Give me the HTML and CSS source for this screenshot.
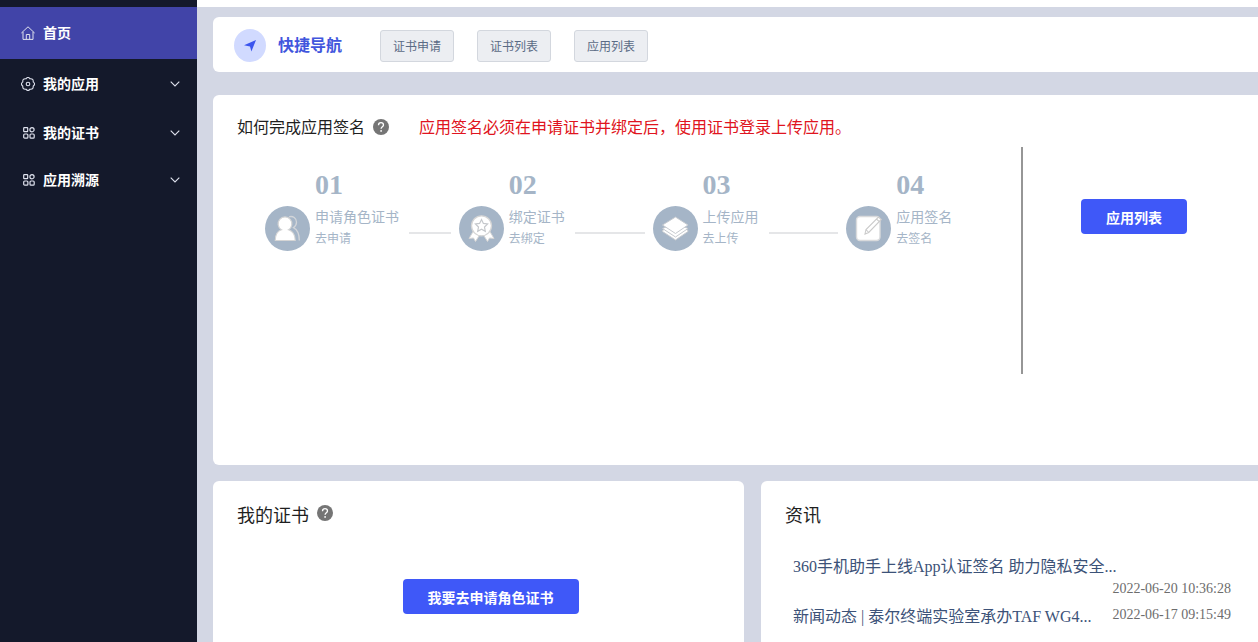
FILE: index.html
```html
<!DOCTYPE html>
<html lang="zh-CN">
<head>
<meta charset="utf-8">
<title>首页</title>
<link rel="stylesheet" href="styles.css">
</head>
<body>
<svg class="defs" aria-hidden="true">
  <symbol id="chevron" viewBox="0 0 10 6"><path d="M.7.7 5 5 9.300.7" fill="none" stroke="currentColor" stroke-width="1.100"/></symbol>
  <symbol id="blocks" viewBox="0 0 12 12"><g fill="none" stroke="currentColor" stroke-width="1.200"><rect x=".7" y=".7" width="4" height="4" rx=".6"/><circle cx="9" cy="2.700" r="2.100"/><rect x=".7" y="7" width="4.200" height="4.200" rx="1"/><rect x="7" y="7" width="4.200" height="4.200" rx="1"/></g></symbol>
  <symbol id="help" viewBox="0 0 16 16"><circle cx="8" cy="8" r="8" fill="#757575"/><path d="M5.500 6.200C5.500 4.600 6.600 3.700 8 3.700s2.500.9 2.500 2.300c0 1.700-2.400 1.900-2.400 3.800" fill="none" stroke="#fff" stroke-width="1.300"/><circle cx="8.100" cy="11.900" r=".9" fill="#fff"/></symbol>
</svg>
<div class="layout">
  <nav class="sidebar">
    <a class="item active" href="#">
      <svg class="icon" viewBox="0 0 14 14"><g fill="none" stroke="currentColor"><path d="M.4 7 7 .8 13.600 7M2 6v7.400h10V6"/><path d="M5.300 13.400V8.500h3.400v4.900"/></g></svg>
      <span class="label">首页</span>
    </a>
    <a class="item" href="#">
      <svg class="icon" viewBox="0 0 14 14"><g fill="none" stroke="currentColor" stroke-width="1.100"><path d="M4.900 1.800Q7-.9 9.100 1.800 12.600 1.400 12.200 4.900 14.900 7 12.200 9.100 12.600 12.600 9.100 12.200 7 14.900 4.900 12.200 1.400 12.600 1.800 9.100-.9 7 1.800 4.900 1.400 1.400 4.900 1.800Z"/><circle cx="7" cy="7" r="1.800"/></g></svg>
      <span class="label">我的应用</span>
      <svg class="chevron"><use href="#chevron"/></svg>
    </a>
    <a class="item small" href="#">
      <svg class="icon blocks"><use href="#blocks"/></svg>
      <span class="label">我的证书</span>
      <svg class="chevron"><use href="#chevron"/></svg>
    </a>
    <a class="item small" href="#">
      <svg class="icon blocks"><use href="#blocks"/></svg>
      <span class="label">应用溯源</span>
      <svg class="chevron"><use href="#chevron"/></svg>
    </a>
  </nav>
  <main class="main">
    <section class="card quick">
      <span class="badge"><svg class="plane" viewBox="0 0 12 12"><path d="M12 0 7.400 11.500 6 6.600 0 5.200Z" fill="#3b55ee"/></svg></span>
      <h2 class="quick-title">快捷导航</h2>
      <div class="quick-links">
        <button class="btn-plain">证书申请</button>
        <button class="btn-plain">证书列表</button>
        <button class="btn-plain">应用列表</button>
      </div>
    </section>

    <section class="card guide">
      <header class="card-head">
        <h2 class="guide-title">如何完成应用签名</h2>
        <svg class="help"><use href="#help"/></svg>
        <p class="warning">应用签名必须在申请证书并绑定后，使用证书登录上传应用。</p>
      </header>
      <div class="guide-body">
        <ol class="steps">
          <li class="step">
            <svg class="step-icon" viewBox="0 0 45 45"><circle cx="22.500" cy="22.500" r="22.500" fill="#a5b5c7"/><path d="M24 10.800c4-1.200 7.500 1.500 7.500 5.500 0 2.400-1.300 4.200-3 5.300 4 2 5.800 5.800 5.800 12.900" fill="none" stroke="#d2d5d9" stroke-width="1.300"/><path d="M10.300 34.500c0-5.800 2-9.300 6.200-10.700a6.900 6.900 0 1 1 7 0c4.200 1.400 6.700 4.900 6.700 10.700Z" fill="#fff" stroke="#d5d5d5" stroke-width="1.200"/></svg>
            <div class="step-text"><strong class="num">01</strong><span class="name">申请角色证书</span><a class="go" href="#">去申请</a></div>
            <i class="line"></i>
          </li>
          <li class="step">
            <svg class="step-icon" viewBox="0 0 45 45"><circle cx="22.500" cy="22.500" r="22.500" fill="#a5b5c7"/><path d="m15 24-5 8.500 4.500-.5 2 3.500 5-8h2l5 8 2-3.500 4.500.5-5-8.500Z" fill="#fff" stroke="#d5d5d5"/><circle cx="22.500" cy="19.800" r="10" fill="#fff" stroke="#d5d5d5" stroke-width="1.300"/><path d="m22.500 13.500 1.900 3.900 4.200.6-3.100 3 .8 4.300-3.800-2-3.800 2 .8-4.300-3.100-3 4.200-.6Z" fill="#fff" stroke="#c5c8cc" stroke-width="1.200"/></svg>
            <div class="step-text"><strong class="num">02</strong><span class="name">绑定证书</span><a class="go" href="#">去绑定</a></div>
            <i class="line"></i>
          </li>
          <li class="step">
            <svg class="step-icon" viewBox="0 0 45 45"><circle cx="22.500" cy="22.500" r="22.500" fill="#a5b5c7"/><g stroke="#c6cacf" stroke-width="1" stroke-linejoin="round" fill="#fff"><path d="m9.500 25.500 13 8.500 12.500-8.500v-1L22.500 17 9.500 24.500Z"/><path d="m9.500 22.500 13 8.500L35 22.500 22.500 17Z"/><path d="m9.500 19 13 8.500L35 19l-12.500-8Z"/></g></svg>
            <div class="step-text"><strong class="num">03</strong><span class="name">上传应用</span><a class="go" href="#">去上传</a></div>
            <i class="line"></i>
          </li>
          <li class="step last">
            <svg class="step-icon" viewBox="0 0 45 45"><circle cx="22.500" cy="22.500" r="22.500" fill="#a5b5c7"/><rect x="10.500" y="10.500" width="23.500" height="24" rx="3.500" fill="#fff" stroke="#d9dadc" stroke-width="1.400"/><path d="m19 28 1-4.500L32.500 11l2.800 2.500-12.600 13Zm1-4.500 2.700 3M30.500 13l2.800 2.600" fill="#fff" stroke="#cbcbcb" stroke-width="1.100"/></svg>
            <div class="step-text"><strong class="num">04</strong><span class="name">应用签名</span><a class="go" href="#">去签名</a></div>
          </li>
        </ol>
        <div class="guide-side"><button class="btn-primary">应用列表</button></div>
      </div>
    </section>

    <div class="bottom">
      <section class="card certs">
        <header class="card-head"><h2 class="card-title">我的证书</h2><svg class="help"><use href="#help"/></svg></header>
        <div class="apply"><button class="btn-primary">我要去申请角色证书</button></div>
      </section>
      <section class="card news">
        <header class="card-head"><h2 class="card-title">资讯</h2></header>
        <ul class="news-list">
          <li class="news-item"><a class="news-link" href="#">360手机助手上线App认证签名 助力隐私安全...</a><time class="date">2022-06-20 10:36:28</time></li>
          <li class="news-item"><a class="news-link" href="#">新闻动态 | 泰尔终端实验室承办TAF WG4...</a><time class="date">2022-06-17 09:15:49</time></li>
        </ul>
      </section>
    </div>
  </main>
</div>
</body>
</html>
```
FILE: styles.css
```css
* { box-sizing: border-box; }
body {
  margin: 0;
  font-family: "Liberation Serif", "Noto Sans CJK SC", serif;
  font-size: 14px;
  color: #1f1f1f;
}
h2, p, ol, ul { margin: 0; padding: 0; list-style: none; font-weight: 400; }
a { color: inherit; text-decoration: none; }
button { font-family: inherit; margin: 0; cursor: pointer; }
svg { display: block; flex: none; }
.defs { position: absolute; width: 0; height: 0; }

.layout { display: flex; height: 100vh; overflow: hidden; }

.sidebar { flex: none; width: 197px; padding-top: 7px; background: #14192b; color: #fff; }
.item { display: flex; align-items: center; height: 50px; padding: 0 17px 0 21px; }
.item.active { height: 52px; background: #4144a8; }
.item.small { height: 47px; }
.icon { width: 14px; height: 14px; margin-right: 8px; color: #dfe2ee; }
.icon.blocks { width: 12px; height: 12px; margin-left: 2px; }
.label { flex: 1; padding-top: 2px; font-weight: 700; line-height: 20px; }
.chevron { width: 10px; height: 6px; color: #dfe2ee; }

.main {
  flex: 1;
  min-width: 0;
  padding: 10px 0 0 16px;
  background: #d3d7e4;
  border-top: 7px solid #fff;
}
.card { background: #fff; border-radius: 6px 0 0 6px; }

.quick { display: flex; align-items: center; padding: 12px 21px 10px; margin-bottom: 23px; }
.badge { display: flex; align-items: center; justify-content: center; width: 32px; height: 33px; border-radius: 50%; background: #d1daff; }
.plane { width: 12px; height: 12px; }
.quick-title { margin: 0 38px 0 12px; font-size: 16px; line-height: 24px; font-weight: 700; color: #4156dd; }
.quick-links { display: flex; gap: 23px; }
.btn-plain {
  min-width: 74px;
  height: 32px;
  padding: 0;
  border: 1px solid #d3d7de;
  border-radius: 3px;
  background: #eceef2;
  color: #5b6b85;
  font-size: 12px;
}

.card-head { display: flex; align-items: flex-start; }
.help { width: 16px; height: 16px; margin: 4px 0 0 8px; }

.guide { padding: 20px 0 91px 24px; margin-bottom: 16px; }
.guide-title, .warning { padding-top: 1px; font-size: 16px; line-height: 24px; }
.warning { margin-left: 30px; color: #e01420; }
.guide-body { display: grid; grid-template-columns: 786fr 235fr; min-height: 227px; margin-top: 7px; }
.steps { display: flex; align-items: flex-start; padding: 22px 0 0 28px; border-right: 2px solid #969696; }
.step { flex: 194 1 0; display: flex; align-items: flex-end; color: #a5b5c7; }
.step.last { flex-grow: 175; }
.step-icon { width: 45px; height: 45px; margin-right: 5px; }
.step-text { display: flex; flex-direction: column; padding-bottom: 1px; white-space: nowrap; }
.num { font-size: 28px; line-height: 32px; margin-bottom: 6px; }
.name { line-height: 21px; }
.go { font-size: 12px; line-height: 22px; }
.line { flex: 1; height: 2px; margin: 0 8px 17px 10px; background: #e5e6e8; }
.guide-side { padding: 52px 0 0 58px; }

.btn-primary {
  height: 35px;
  padding: 0 25px;
  border: 0;
  border-radius: 4px;
  background: #3f58f8;
  color: #fff;
  font-size: 14px;
  font-weight: 700;
}

.bottom { display: grid; grid-template-columns: 531fr 497fr; gap: 17px; min-height: 180px; }
.certs { padding: 20px 0 0 24px; border-radius: 6px; }
.news { padding: 20px 27px 0 24px; }
.card-title { padding-top: 2px; font-size: 18px; line-height: 27px; }
.apply { display: flex; justify-content: center; padding-top: 49px; }
.news-list { display: flex; flex-direction: column; gap: 6px; padding: 25px 0 0 8px; }
.news-item { display: flex; flex-wrap: wrap; }
.news-link { font-size: 16px; line-height: 24px; color: #3c5278; }
.date { margin-left: auto; line-height: 20px; color: #6d6d6d; }
```
